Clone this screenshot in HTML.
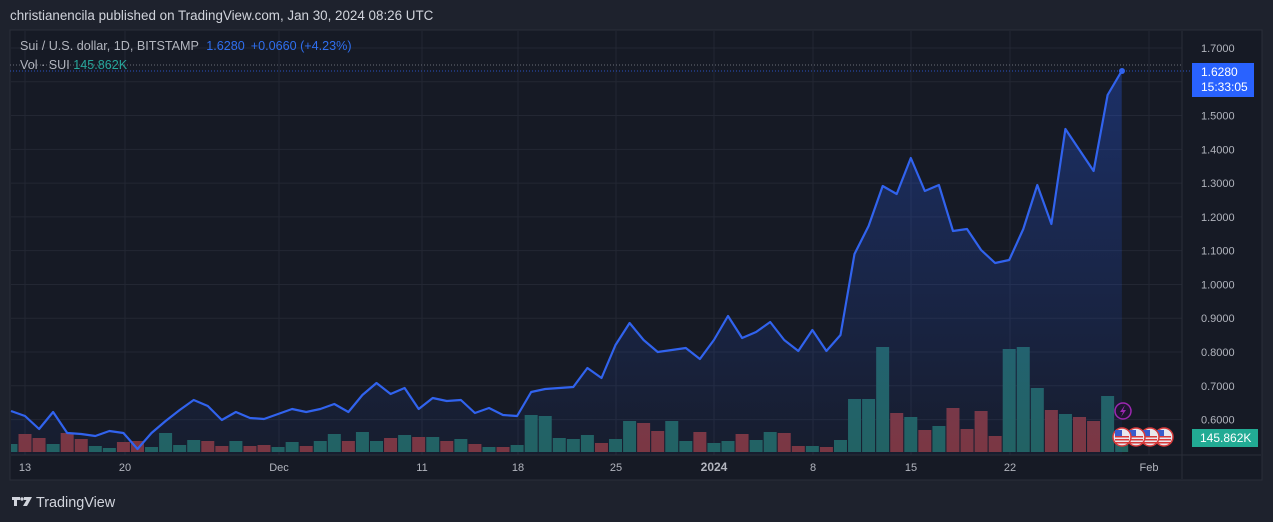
<!DOCTYPE html>
<html><head><meta charset="utf-8"><style>
html,body{margin:0;padding:0;background:#1e222d;width:1273px;height:522px;overflow:hidden;font-family:"Liberation Sans",sans-serif;}
.t{position:absolute;white-space:nowrap;}
</style></head><body>
<div class="t" style="left:10px;top:8px;font-size:13.4px;color:#d1d4dc;">christianencila published on TradingView.com, Jan 30, 2024 08:26 UTC</div>
<svg id="s" width="1273" height="522" style="position:absolute;left:0;top:0" xmlns="http://www.w3.org/2000/svg">
<defs><linearGradient id="g" x1="0" y1="0" x2="0" y2="1"><stop offset="0" stop-color="#2962ff" stop-opacity="0.30"/><stop offset="1" stop-color="#2962ff" stop-opacity="0.04"/></linearGradient></defs>
<rect x="10" y="30" width="1252" height="450" fill="#161a25" stroke="#2a2e39" stroke-width="1"/>
<g id="grid" stroke="#232733" stroke-width="1"></g>
<g id="vol"></g>
<path id="area" fill="url(#g)"/>
<polyline id="line" fill="none" stroke="#3163ee" stroke-width="2.2" stroke-linejoin="round"/>
<circle cx="1122" cy="71" r="3" fill="#3163ee"/>
<line x1="10" y1="65" x2="1182" y2="65" stroke="#6a6d78" stroke-dasharray="1,2"/>
<line x1="10" y1="71" x2="1190" y2="71" stroke="#2f5fe8" stroke-dasharray="1,2" opacity="0.8"/>
<g id="axis" font-family="Liberation Sans,sans-serif" font-size="11" fill="#b2b5be"></g>
<rect x="1192" y="63" width="62" height="34" fill="#2962ff"/>
<text x="1201" y="76" font-family="Liberation Sans,sans-serif" font-size="12" fill="#fff">1.6280</text>
<text x="1201" y="91" font-family="Liberation Sans,sans-serif" font-size="12" fill="#fff">15:33:05</text>
<rect x="1192" y="429" width="66" height="18" fill="#22ab94"/>
<text x="1200" y="442" font-family="Liberation Sans,sans-serif" font-size="12" fill="#fff">145.862K</text>
<circle cx="1123" cy="411" r="8" fill="#1e1530" stroke="#9c27b0" stroke-width="1.5"/>
<path d="M1125 405 L1120 412 L1123 412 L1121 417 L1126 410 L1123 410 Z" fill="#9c27b0"/>
<g id="flags"></g>
<text x="20" y="50" font-family="Liberation Sans,sans-serif" font-size="12.6" fill="#b2b5be">Sui / U.S. dollar, 1D, BITSTAMP <tspan fill="#2f6fef" dx="4">1.6280</tspan><tspan fill="#2f6fef" dx="6">+0.0660 (+4.23%)</tspan></text>
<text x="20" y="69" font-family="Liberation Sans,sans-serif" font-size="12.6" fill="#b2b5be">Vol · SUI <tspan fill="#26a69a">145.862K</tspan></text>
<g fill="#d1d4dc"><path d="M12 497 h8 v3 h-3 v6 h-3 v-6 h-2z"/><circle cx="22" cy="499" r="1.7"/><path d="M24 497 h8 l-5 9 h-4 l3.5 -6 h-2.5z"/></g>
<text x="36" y="507" font-family="Liberation Sans,sans-serif" font-size="14.4" fill="#d1d4dc">TradingView</text>
</svg>
<script>
var s=document.getElementById('s');
function X(d){return 25+14.06*d;}
function Y(p){return 48+(1.7-p)*337.8;}
var ns="http://www.w3.org/2000/svg";
function el(t,a,p){var e=document.createElementNS(ns,t);for(var k in a)e.setAttribute(k,a[k]);(p||s).appendChild(e);return e;}
var grid=document.getElementById('grid'),axis=document.getElementById('axis');
[25,125,279,422,518,616,714,813,911,1010,1149].forEach(function(x){el('line',{x1:x,y1:31,x2:x,y2:455},grid);});
for(var i=0;i<=11;i++){var p=1.7-i*0.1,y=Y(p);el('line',{x1:11,y1:y,x2:1182,y2:y},grid);if(i!=1){var t=el('text',{x:1201,y:y+4},axis);t.textContent=p.toFixed(4);}}
el('line',{x1:1182,y1:31,x2:1182,y2:479,stroke:'#2a2e39'});
el('line',{x1:11,y1:455,x2:1261,y2:455,stroke:'#2a2e39'});
[[25,'13'],[125,'20'],[279,'Dec'],[422,'11'],[518,'18'],[616,'25'],[714,'2024'],[813,'8'],[911,'15'],[1010,'22'],[1149,'Feb']].forEach(function(a){var t=el('text',{x:a[0],y:471,'text-anchor':'middle'},axis);t.textContent=a[1];if(a[1]=='2024'){t.setAttribute('font-weight','bold');t.setAttribute('font-size','12');}});
var v="8g 18r 14r 8g 19r 13r 6g 4g 10r 11r 5g 19g 7g 12g 11r 6r 11g 6r 7r 5g 10g 6r 11g 18g 11r 20g 11g 14r 17g 15r 15g 11r 13g 8r 5g 5r 7g 37g 36g 14g 13g 17g 9r 13g 31g 29r 21r 31g 11g 20r 9g 11g 18r 12g 20g 19r 6r 6g 5r 12g 53g 53g 105g 39r 35g 22r 26g 44r 23r 41r 16r 103g 105g 64g 42r 38g 35r 31r 56g 10g".split(' ');
var vg=document.getElementById('vol');
v.forEach(function(b,i){var d=i-1,h=parseInt(b),c=b.slice(-1)=='g'?'#22625d':'#7e353b';var x=Math.max(11,X(d)-6.5);el('rect',{x:x,y:452-h,width:X(d)+6.5-x,height:h,fill:c},vg);});
var ys=[411,416,429,412,433,434,436,431,433,449,433,421,410,400,406,420,412,418,419,414,409,412,409,404,412,395,383,394,388,409,398,401,400,413,408,415,416,392,389,388,387,368,378,345,323,340,352,350,348,359,340,316,338,332,322,340,351,330,351,335,254,226,186,194,158,191,185,231,229,250,263,260,229,185,224,129,150,171,95,71];
var pts=ys.map(function(y,i){var x=i==0?11:X(i-1);return x.toFixed(1)+','+y;});
document.getElementById('line').setAttribute('points',pts.join(' '));
document.getElementById('area').setAttribute('d','M'+pts.join(' L')+' L1122,455 L11,455 Z');
var fg=document.getElementById('flags');
[1164,1150,1136,1122].forEach(function(cx){var cy=437;
el('circle',{cx:cx,cy:cy,r:9,fill:'#e8e8ee',stroke:'#d83a3a','stroke-width':1.5},fg);
for(var k=0;k<3;k++)el('rect',{x:cx-7,y:cy-1+k*3,width:14,height:1.5,fill:'#d83a3a'},fg);
el('rect',{x:cx-7,y:cy-7,width:7,height:6,fill:'#3a5ccc'},fg);});
</script>
</body></html>
